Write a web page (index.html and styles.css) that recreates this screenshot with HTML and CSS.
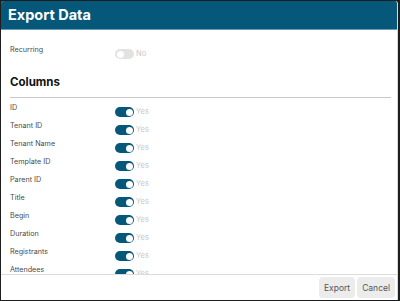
FILE: index.html
```html
<!DOCTYPE html>
<html>
<head>
<meta charset="utf-8">
<link rel="stylesheet" href="styles.css">
</head>
<body>
<div class="dialog">
  <div class="header">Export Data</div>
  <div class="content">
    <div class="row first">
      <span class="label">Recurring</span>
      <span class="toggle off"><span class="knob"></span></span>
      <span class="state">No</span>
    </div>
    <h2 class="section">Columns</h2>
    <div class="rows">
      <div class="row"><span class="label">ID</span><span class="toggle on"><span class="knob"></span></span><span class="state">Yes</span></div>
      <div class="row"><span class="label">Tenant ID</span><span class="toggle on"><span class="knob"></span></span><span class="state">Yes</span></div>
      <div class="row"><span class="label">Tenant Name</span><span class="toggle on"><span class="knob"></span></span><span class="state">Yes</span></div>
      <div class="row"><span class="label">Template ID</span><span class="toggle on"><span class="knob"></span></span><span class="state">Yes</span></div>
      <div class="row"><span class="label">Parent ID</span><span class="toggle on"><span class="knob"></span></span><span class="state">Yes</span></div>
      <div class="row"><span class="label">Title</span><span class="toggle on"><span class="knob"></span></span><span class="state">Yes</span></div>
      <div class="row"><span class="label">Begin</span><span class="toggle on"><span class="knob"></span></span><span class="state">Yes</span></div>
      <div class="row"><span class="label">Duration</span><span class="toggle on"><span class="knob"></span></span><span class="state">Yes</span></div>
      <div class="row"><span class="label">Registrants</span><span class="toggle on"><span class="knob"></span></span><span class="state">Yes</span></div>
      <div class="row"><span class="label">Attendees</span><span class="toggle on"><span class="knob"></span></span><span class="state">Yes</span></div>
    </div>
  </div>
  <div class="footer">
    <button class="btn">Export</button>
    <button class="btn">Cancel</button>
  </div>
</div>
</body>
</html>
```
FILE: styles.css
```css
html, body {
  margin: 0;
  padding: 0;
  height: 100%;
}
body {
  background: #1e1e1e;
  font-family: Inter, "Liberation Sans", sans-serif;
  padding: 1px 2px 1px 1px;
  box-sizing: border-box;
  height: 301px;
  overflow: hidden;
}
.dialog {
  height: 299px;
  background: #fff;
  border-radius: 3px 3px 0 0;
  display: flex;
  flex-direction: column;
  overflow: hidden;
  border-right: 1px solid #d8d8d8;
}
.header {
  height: 28px;
  background: #05587a;
  border-bottom: 1px solid #6b9bb2;
  color: #fff;
  font-weight: 700;
  font-size: 14.5px;
  line-height: 28px;
  padding-left: 7px;
  flex: none;
}
.content {
  flex: 1;
  overflow: hidden;
  padding: 0 6px 0 9px;
  border-bottom: 1px solid #dcdcdc;
}
.row {
  display: flex;
  align-items: flex-start;
  height: 18px;
}
.row.first {
  margin-top: 14px;
}
.label {
  width: 105px;
  flex: none;
  font-size: 7.2px;
  line-height: 10px;
  color: #4a4a4a;
  padding-top: 1px;
}
.toggle {
  width: 19px;
  height: 10px;
  border-radius: 5px;
  margin-top: 5px;
  position: relative;
  flex: none;
}
.toggle.on { background: #05587a; }
.toggle.off { background: #e2e2e2; }
.knob {
  position: absolute;
  top: 1.5px;
  width: 7px;
  height: 7px;
  border-radius: 50%;
  background: #fff;
}
.toggle.on .knob { right: 1.5px; }
.toggle.off .knob { left: 1.5px; }
.state {
  font-size: 7.5px;
  line-height: 10px;
  color: #c8c8c8;
  margin-left: 2px;
  margin-top: 5px;
}
.section {
  margin: 12px 0 0 0;
  font-size: 11.5px;
  font-weight: 700;
  color: #111;
  line-height: 16px;
  padding-bottom: 7px;
  border-bottom: 1px solid #c8c8c8;
}
.rows {
  padding-top: 4px;
}
.footer {
  flex: none;
  height: 25px;
  display: flex;
  justify-content: flex-end;
  align-items: flex-start;
  gap: 2px;
  padding: 2px 2px 0 0;
  box-sizing: border-box;
}
.btn {
  font-family: Inter, "Liberation Sans", sans-serif;
  font-size: 8.5px;
  color: #555;
  background: #ececec;
  border: none;
  border-radius: 4px;
  height: 21px;
  padding: 0 5px;
}
```
